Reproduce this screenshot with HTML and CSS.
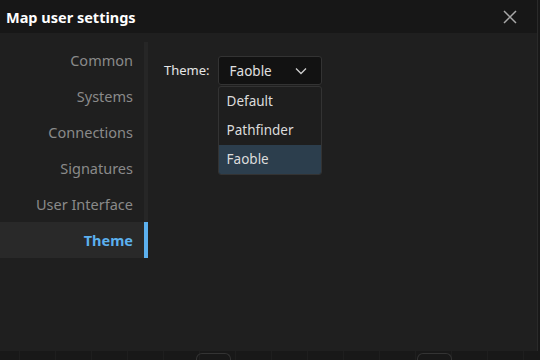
FILE: index.html
```html
<!DOCTYPE html>
<html>
  <head>
    <title>Map user settings</title>
    <link rel="stylesheet" href="styles.css">
  </head>
  <body>
    <div class="map">
      <div class="node node-a"></div>
      <div class="node node-b"></div>
    </div>
    <div class="dialog">
      <div class="dialog-header">
        <span class="dialog-title">Map user settings</span>
        <span class="dialog-close">
          <svg width="16" height="16" viewBox="0 0 16 16">
            <path d="M2 2 L14 14 M14 2 L2 14" stroke="#a8a8a8" stroke-width="1.5" fill="none" />
          </svg>
        </span>
      </div>
      <div class="dialog-body">
        <div class="tabs">
          <div class="tab">Common</div>
          <div class="tab">Systems</div>
          <div class="tab">Connections</div>
          <div class="tab">Signatures</div>
          <div class="tab">User Interface</div>
          <div class="tab active">Theme</div>
        </div>
        <div class="content">
          <div class="field">
            <label class="field-label">Theme:</label>
            <div class="select">
              <div class="select-box">
                <span>Faoble</span>
                <svg width="12" height="8" viewBox="0 0 12 8">
                  <path d="M1 1.5 L6 6.5 L11 1.5" stroke="#cfcfcf" stroke-width="1.3" fill="none" />
                </svg>
              </div>
              <div class="select-menu">
                <div class="option">Default</div>
                <div class="option">Pathfinder</div>
                <div class="option selected">Faoble</div>
              </div>
            </div>
          </div>
        </div>
      </div>
    </div>
  </body>
</html>
```

FILE: styles.css
```css
html,
body {
  margin: 0;
  height: 100%;
}
body {
  background-color: #181818;
  background-image: repeating-linear-gradient(
    to right,
    transparent 0px,
    transparent 19px,
    #1e1e1e 19px,
    #1e1e1e 20px,
    transparent 20px,
    transparent 36px
  );
  font-family: "Noto Sans", "Open Sans", sans-serif;
  position: relative;
  overflow: hidden;
}
.map {
  position: absolute;
  inset: 0;
  overflow: hidden;
}
.node {
  position: absolute;
  top: 353px;
  width: 35px;
  height: 7px;
  border: 1px solid #333;
  border-bottom: none;
  border-radius: 6px 6px 0 0;
  box-sizing: border-box;
}
.node-a {
  left: 196px;
}
.node-b {
  left: 417px;
}
.dialog {
  position: relative;
  width: 538px;
  height: 351px;
  background: #1f1f1f;
  border-right: 1px solid #2a2a2a;
  box-sizing: border-box;
  display: flex;
  flex-direction: column;
}
.dialog-header {
  height: 33px;
  background: #171717;
  display: flex;
  align-items: center;
  justify-content: space-between;
  padding: 0 19px 0 6px;
  flex-shrink: 0;
}
.dialog-title {
  color: #ffffff;
  font-weight: bold;
  font-size: 14.5px;
}
.dialog-close {
  display: flex;
}
.dialog-body {
  display: flex;
  padding-top: 9px;
}
.tabs {
  width: 148px;
  box-sizing: border-box;
  border-right: 4px solid #262626;
  height: 216px;
}
.tab {
  height: 36px;
  line-height: 36px;
  text-align: right;
  padding-right: 11px;
  color: #8a8a8a;
  font-size: 14.5px;
}
.tab.active {
  background: #292929;
  color: #5cb0ee;
  font-weight: bold;
  margin-right: -4px;
  border-right: 4px solid #5cb0ee;
  padding-right: 11px;
}
.content {
  padding: 14px 0 0 16px;
}
.field {
  display: flex;
  align-items: flex-start;
  gap: 8px;
}
.field-label {
  color: #e6e6e6;
  font-size: 13px;
  line-height: 29px;
}
.select {
  width: 104px;
}
.select-box {
  height: 29px;
  box-sizing: border-box;
  background: #121212;
  border: 1px solid #333;
  border-radius: 3px;
  display: flex;
  align-items: center;
  justify-content: space-between;
  padding: 0 14px 0 11px;
  color: #e0e0e0;
  font-size: 13.5px;
}
.select-menu {
  margin-top: 1px;
  background: #1e1e1e;
  border: 1px solid #333;
  border-radius: 3px;
  overflow: hidden;
}
.option {
  height: 29px;
  line-height: 29px;
  padding-left: 8px;
  color: #dcdcdc;
  font-size: 13.5px;
}
.option.selected {
  background: #2c3e4d;
}
```
